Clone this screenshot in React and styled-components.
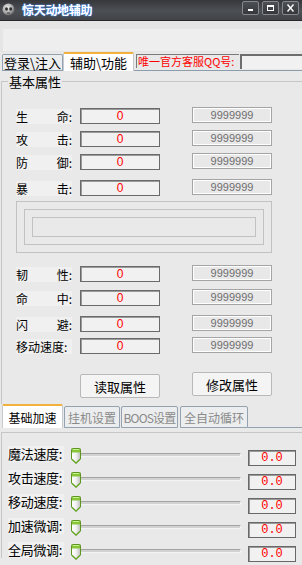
import React from 'react';
import styled, { createGlobalStyle } from 'styled-components';

const Global = createGlobalStyle`
  html, body { margin: 0; padding: 0; background: #e9e9e9; overflow: hidden; }
  body { font-family: "Noto Sans CJK SC", "Liberation Sans", sans-serif; }
  * { box-sizing: border-box; }
`;

const Window = styled.div`
  width: 302px;
  height: 565px;
  overflow: hidden;
  background: #e9e9e9;
  display: flex;
  flex-direction: column;
`;

const TitleBar = styled.div`
  height: 21px;
  flex-shrink: 0;
  display: flex;
  align-items: flex-start;
  background: linear-gradient(#35373b, #4d5055 55%, #404246);
  border-bottom: 1px solid #26282b;
`;

const AppIcon = styled.svg`
  width: 13px;
  height: 13px;
  margin: 3px 0 0 2px;
`;

const Title = styled.div`
  margin: 2px 0 0 7px;
  color: #ffffff;
  font-size: 12px;
  font-weight: bold;
  line-height: 16px;
  letter-spacing: -0.3px;
  text-shadow: 0 0 2px #3f8fff, 0 0 1px #3f8fff;
`;

const WinButtons = styled.div`
  margin: 1px 3px 0 auto;
  display: flex;
  gap: 3px;
`;

const WinButton = styled.div`
  width: 17px;
  height: 14px;
  border: 1px solid #85888d;
  border-radius: 2px;
  background: linear-gradient(#4c4f54, #35373b);
  display: flex;
  align-items: center;
  justify-content: center;
`;

const TopArea = styled.div`
  height: 31px;
  flex-shrink: 0;
  padding: 8px 0 0 3px;
  background: #e5e5e5;
`;

const TopBand = styled.div`
  height: 22px;
  background: #eeeeee;
`;

const TabsRow = styled.div`
  height: 19px;
  flex-shrink: 0;
  display: flex;
  align-items: flex-end;
  padding-left: 2px;
`;

const Tab = styled.div`
  height: ${p => (p.$active ? '19px' : '17px')};
  width: ${p => p.$w}px;
  flex-shrink: 0;
  display: flex;
  align-items: center;
  justify-content: center;
  white-space: nowrap;
  font-size: 13px;
  line-height: 15px;
  color: ${p => (p.$active ? '#000' : p.$dim ? '#8a8a8a' : '#000')};
  background: ${p => (p.$active ? '#ffffff' : '#ebedee')};
  border: 1px solid ${p => (p.$active ? '#c4ccd2' : '#93a2ae')};
  border-top: ${p => (p.$active ? '2px solid #f2b03c' : '1px solid #93a2ae')};
  border-bottom: ${p => (p.$active ? 'none' : '1px solid #8d9cab')};
  border-radius: 2px 2px 0 0;
  margin-right: ${p => p.$mr || 0}px;
`;

const TabFill = styled.div`
  flex: 1;
  align-self: stretch;
  display: flex;
  align-items: flex-start;
  padding: 2px 0 0 2px;
  gap: 1px;
  border-bottom: 1px solid #8d9cab;
`;

const RedLabel = styled.div`
  width: 103px;
  height: 14px;
  flex-shrink: 0;
  border-top: 1px solid #7a7a7a;
  border-left: 1px solid #7a7a7a;
  background: #e8e8e8;
  color: #ff0000;
  font-size: 11px;
  line-height: 13px;
  padding-left: 1px;
  white-space: nowrap;
  overflow: hidden;
`;

const QQInput = styled.div`
  flex: 1;
  height: 15px;
  border-top: 2px solid #6e6e6e;
  border-left: 2px solid #6e6e6e;
  background: #f1f1f1;
`;

const GroupBox = styled.div`
  flex-shrink: 0;
  width: 340px;
  margin: ${p => p.$mt}px 0 0 1px;
  border-top: 1px solid #c6c6c6;
  border-left: 1px solid #c6c6c6;
  padding-bottom: ${p => p.$pb || 0}px;
  display: flex;
  flex-direction: column;
`;

const Legend = styled.div`
  align-self: flex-start;
  margin: -8px 0 0 6px;
  padding: 0 1px;
  background: #e9e9e9;
  font-size: 13px;
  line-height: 15px;
  color: #000;
`;

const StatRow = styled.div`
  display: flex;
  align-items: center;
  height: 16px;
  margin-top: ${p => p.$mt}px;
  padding-left: 14px;
`;

const StatLabel = styled.div`
  width: 56px;
  height: 15px;
  background: #f0f0f0;
  display: flex;
  justify-content: space-between;
  align-items: center;
  font-size: 12px;
  line-height: 15px;
  color: #000;
  white-space: nowrap;
`;

const ValueBox = styled.div`
  width: 80px;
  height: 16px;
  margin-left: 8px;
  border: 1px solid #6a6a6a;
  box-shadow: inset 1px 1px 0 #9a9a9a;
  background: #f1f1f1;
  color: #ff0000;
  font-family: "Liberation Sans", sans-serif;
  font-size: 12px;
  line-height: 14px;
  text-align: center;
`;

const MaxBox = styled.div`
  width: 80px;
  height: 16px;
  margin: -2px 0 0 32px;
  border: 1px solid #a4a4a4;
  box-shadow: inset 0 0 0 1px #ffffff;
  background: #e8e8e8;
  color: #6e6e6e;
  font-family: "Liberation Sans", sans-serif;
  font-size: 11px;
  line-height: 14px;
  text-align: center;
`;

const Frame = styled.div`
  margin: ${p => p.$mt || 0}px 0 0 ${p => p.$ml || 0}px;
  width: ${p => p.$w}px;
  height: ${p => p.$h}px;
  border: 1px solid #c2c2c2;
  padding: 7px;
`;

const ButtonRow = styled.div`
  display: flex;
  align-items: flex-start;
  margin-top: 18px;
  padding-left: 78px;
`;

const ActionButton = styled.div`
  width: 80px;
  height: 24px;
  margin: ${p => p.$mt || 0}px 0 0 ${p => p.$ml || 0}px;
  border: 1px solid #b9b9b9;
  border-radius: 2px;
  background: #f4f4f4;
  display: flex;
  align-items: center;
  justify-content: center;
  font-size: 13px;
  color: #000;
`;

const BottomTabs = styled.div`
  height: 24px;
  flex-shrink: 0;
  display: flex;
  align-items: flex-end;
  padding-left: 2px;
`;

const BottomTab = styled(Tab)`
  height: ${p => (p.$active ? '24px' : '22px')};
  font-size: 12px;
  letter-spacing: ${p => (p.$tight ? '-0.8px' : '0')};
  border-bottom: ${p => (p.$active ? 'none' : '1px solid #93a2ae')};
`;

const BottomFill = styled.div`
  flex: 1;
  align-self: stretch;
  border-bottom: 1px solid #93a2ae;
`;

const SliderRow = styled.div`
  display: flex;
  align-items: flex-start;
  height: 16px;
  margin-top: ${p => p.$mt}px;
  padding-left: 6px;
`;

const SliderLabel = styled.div`
  width: 56px;
  height: 16px;
  background: #f0f0f0;
  font-size: 13px;
  line-height: 16px;
  color: #000;
  white-space: nowrap;
  letter-spacing: -0.3px;
`;

const Slider = styled.div`
  position: relative;
  width: 170px;
  height: 16px;
  margin-left: 7px;
`;

const Track = styled.div`
  margin: 7px 0 0 3px;
  height: 4px;
  border-top: 1px solid #a4a4a4;
  border-left: 1px solid #a4a4a4;
  border-bottom: 1px solid #f4f4f4;
  border-right: 1px solid #f4f4f4;
  background: #d2d2d2;
`;

const Thumb = styled.svg`
  position: absolute;
  left: 0;
  top: 2px;
  width: 10px;
  height: 16px;
`;

const SpeedBox = styled.div`
  width: 48px;
  height: 16px;
  margin: 4px 0 0 7px;
  border: 1px solid #686868;
  box-shadow: inset 1px 1px 0 #9a9a9a;
  background: #f1f1f1;
  color: #ff0000;
  font-family: "Liberation Mono", monospace;
  font-size: 12px;
  line-height: 14px;
  text-align: center;
`;

const stats1 = [
  { a: '生', b: '命:', mt: 19 },
  { a: '攻', b: '击:', mt: 7 },
  { a: '防', b: '御:', mt: 7 },
  { a: '暴', b: '击:', mt: 10 },
];
const stats2 = [
  { a: '韧', b: '性:', mt: 13 },
  { a: '命', b: '中:', mt: 8 },
  { a: '闪', b: '避:', mt: 10 },
  { a: '移动速度:', b: '', mt: 6 },
];
const sliders = ['魔法速度:', '攻击速度:', '移动速度:', '加速微调:', '全局微调:'];

function Stat({ a, b, mt }) {
  return (
    <StatRow $mt={mt}>
      <StatLabel>
        <span>{a}</span>
        {b && <span>{b}</span>}
      </StatLabel>
      <ValueBox>0</ValueBox>
      <MaxBox>9999999</MaxBox>
    </StatRow>
  );
}

function ThumbIcon() {
  return (
    <Thumb viewBox="0 0 10 16">
      <defs>
        <linearGradient id="tb" x1="0" x2="1" y1="0" y2="0">
          <stop offset="0" stopColor="#ffffff" />
          <stop offset="0.5" stopColor="#f2f2f2" />
          <stop offset="1" stopColor="#bdbdbd" />
        </linearGradient>
      </defs>
      <path d="M1.5 0.5 H8.5 Q9.5 0.5 9.5 1.5 V11 L5 15.5 L0.5 11 V1.5 Q0.5 0.5 1.5 0.5 Z" fill="url(#tb)" stroke="#5e9420" />
      <path d="M1 1 H9 V4.5 H1 Z" fill="#86c83a" />
      <path d="M2 1.5 H8" stroke="#c8f08a" strokeWidth="1" />
      <path d="M1 11.2 L5 15 L9 11.2" fill="none" stroke="#6aa82a" strokeWidth="1.2" />
    </Thumb>
  );
}

export default function App() {
  return (
    <>
      <Global />
      <Window>
        <TitleBar>
          <AppIcon viewBox="0 0 13 13">
            <defs>
              <radialGradient id="ball" cx="0.4" cy="0.35" r="0.7">
                <stop offset="0" stopColor="#f0f0f0" />
                <stop offset="0.6" stopColor="#a8a8a8" />
                <stop offset="1" stopColor="#555" />
              </radialGradient>
            </defs>
            <circle cx="6.5" cy="6.5" r="6" fill="url(#ball)" />
            <ellipse cx="4.5" cy="6" rx="1.5" ry="1.8" fill="#333" />
            <ellipse cx="8.7" cy="6" rx="1.5" ry="1.8" fill="#333" />
            <path d="M5 10 H8" stroke="#444" strokeWidth="1" />
          </AppIcon>
          <Title>惊天动地辅助</Title>
          <WinButtons>
            <WinButton>
              <svg width="9" height="8" viewBox="0 0 9 8">
                <rect x="2" y="5" width="5" height="2" fill="#fff" />
              </svg>
            </WinButton>
            <WinButton>
              <svg width="9" height="8" viewBox="0 0 9 8">
                <rect x="1.5" y="1.5" width="6" height="5" fill="none" stroke="#fff" />
                <rect x="1" y="1" width="7" height="2" fill="#fff" />
              </svg>
            </WinButton>
            <WinButton>
              <svg width="9" height="8" viewBox="0 0 9 8">
                <path d="M1.5 0.5 L7.5 7.5 M7.5 0.5 L1.5 7.5" stroke="#fff" strokeWidth="1.4" />
              </svg>
            </WinButton>
          </WinButtons>
        </TitleBar>
        <TopArea>
          <TopBand />
        </TopArea>
        <TabsRow>
          <Tab $w={61}>登录\注入</Tab>
          <Tab $w={71} $active>辅助\功能</Tab>
          <TabFill>
            <RedLabel>唯一官方客服QQ号:</RedLabel>
            <QQInput />
          </TabFill>
        </TabsRow>
        <GroupBox $mt={10} $pb={6}>
          <Legend>基本属性</Legend>
          {stats1.map((s, i) => (
            <Stat key={i} {...s} />
          ))}
          <Frame $mt={5} $ml={14} $w={256} $h={52}>
            <Frame $w={240} $h={36}>
              <Frame $w={224} $h={20} />
            </Frame>
          </Frame>
          {stats2.map((s, i) => (
            <Stat key={i} {...s} />
          ))}
          <ButtonRow>
            <ActionButton $mt={2}>读取属性</ActionButton>
            <ActionButton $ml={32}>修改属性</ActionButton>
          </ButtonRow>
        </GroupBox>
        <BottomTabs>
          <BottomTab $w={61} $active $mr={1}>基础加速</BottomTab>
          <BottomTab $w={56} $dim $mr={1}>挂机设置</BottomTab>
          <BottomTab $w={57} $dim $tight $mr={2}>BOOS设置</BottomTab>
          <BottomTab $w={68} $dim>全自动循环</BottomTab>
          <BottomFill />
        </BottomTabs>
        <GroupBox $mt={4}>
          {sliders.map((s, i) => (
            <SliderRow key={s} $mt={i === 0 ? 13 : 8}>
              <SliderLabel>{s}</SliderLabel>
              <Slider>
                <Track />
                <ThumbIcon />
              </Slider>
              <SpeedBox>0.0</SpeedBox>
            </SliderRow>
          ))}
        </GroupBox>
      </Window>
    </>
  );
}
